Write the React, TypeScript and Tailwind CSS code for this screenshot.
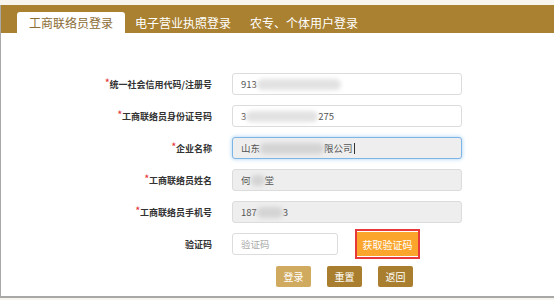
import React from "react";

const font = { fontFamily: '"Noto Sans CJK SC", "Noto Sans", sans-serif' };

function Blur({ w, dark = false }: { w: number; dark?: boolean }) {
  return (
    <span
      className={`inline-block h-[11px] rounded-full blur-[2px] align-middle ${dark ? "bg-[#d4d4d4]" : "bg-[#e2e2e2]"}`}
      style={{ width: w }}
    />
  );
}

function Row({ label, children, star = true }: { label: string; children: React.ReactNode; star?: boolean }) {
  return (
    <div className="flex h-[22px] items-center">
      <div className="w-[211px] text-right text-[9px] font-bold leading-none text-[#333]">
        {star && <span className="relative top-[-2px] text-[#e4393c]">*</span>}
        {label}
      </div>
      <div className="ml-[20px]">{children}</div>
    </div>
  );
}

function Field({
  children,
  gray = false,
  focus = false,
}: {
  children: React.ReactNode;
  gray?: boolean;
  focus?: boolean;
}) {
  return (
    <div
      className={`flex h-[22px] w-[230px] items-center rounded-[3px] border px-[8px] text-[9.5px] text-[#555] ${
        focus
          ? "border-[#7fb5e6] bg-[#eeeeee] shadow-[0_0_4px_rgba(102,175,233,0.6)]"
          : gray
          ? "border-[#dcdcdc] bg-[#eeeeee]"
          : "border-[#dcdcdc] bg-white"
      }`}
    >
      {children}
    </div>
  );
}

export default function App() {
  return (
    <div className="h-[300px] w-[554px] bg-[#f8f5ee] pt-[5px]" style={font}>
      <div className="h-[293px] border-b-2 border-l border-[#a8a8a8] bg-white">
        {/* tab bar */}
        <div className="flex h-[28px] items-end bg-[#aa8130] pl-[16px]">
          <div className="flex h-[21px] w-[108px] items-center justify-center rounded-t-[3px] bg-white text-[12px] text-[#8a6c35]">
            工商联络员登录
          </div>
          <div className="ml-[10px] flex h-[21px] items-center text-[12px] text-white">电子营业执照登录</div>
          <div className="ml-[19px] flex h-[21px] items-center text-[12px] text-white">农专、个体用户登录</div>
        </div>

        {/* form */}
        <div className="flex flex-col gap-[10px] pt-[40px]">
          <Row label="统一社会信用代码/注册号">
            <Field>
              <span>913</span>
              <Blur w={84} />
            </Field>
          </Row>
          <Row label="工商联络员身份证号码">
            <Field>
              <span>3</span>
              <Blur w={72} />
              <span>275</span>
            </Field>
          </Row>
          <Row label="企业名称">
            <Field focus>
              <span>山东</span>
              <Blur w={64} dark />
              <span>限公司</span>
              <span className="ml-[1px] inline-block h-[11px] w-px bg-[#333]" />
            </Field>
          </Row>
          <Row label="工商联络员姓名">
            <Field gray>
              <span>何</span>
              <Blur w={14} dark />
              <span>堂</span>
            </Field>
          </Row>
          <Row label="工商联络员手机号">
            <Field gray>
              <span>187</span>
              <Blur w={26} dark />
              <span>3</span>
            </Field>
          </Row>
          <Row label="验证码" star={false}>
            <div className="flex items-center">
              <div className="flex h-[22px] w-[106px] items-center rounded-[3px] border border-[#dcdcdc] bg-white px-[8px] text-[9.5px] text-[#aaa]">
                验证码
              </div>
              <div className="ml-[17px] flex h-[30px] w-[65px] items-center border-2 border-[#e8393a] bg-white py-[1px]">
                <div className="flex h-full w-full items-center justify-center bg-[#fba52c] text-[10px] text-white">
                  获取验证码
                </div>
              </div>
            </div>
          </Row>
          <div className="mt-[1px] flex gap-[16px] pl-[275px]">
            <div className="flex h-[21px] w-[35px] items-center justify-center rounded-[2px] bg-[#d0aa5e] text-[10px] text-white">
              登录
            </div>
            <div className="flex h-[21px] w-[35px] items-center justify-center rounded-[2px] bg-[#a97f2f] text-[10px] text-white">
              重置
            </div>
            <div className="flex h-[21px] w-[35px] items-center justify-center rounded-[2px] bg-[#a97f2f] text-[10px] text-white">
              返回
            </div>
          </div>
        </div>
      </div>
    </div>
  );
}
